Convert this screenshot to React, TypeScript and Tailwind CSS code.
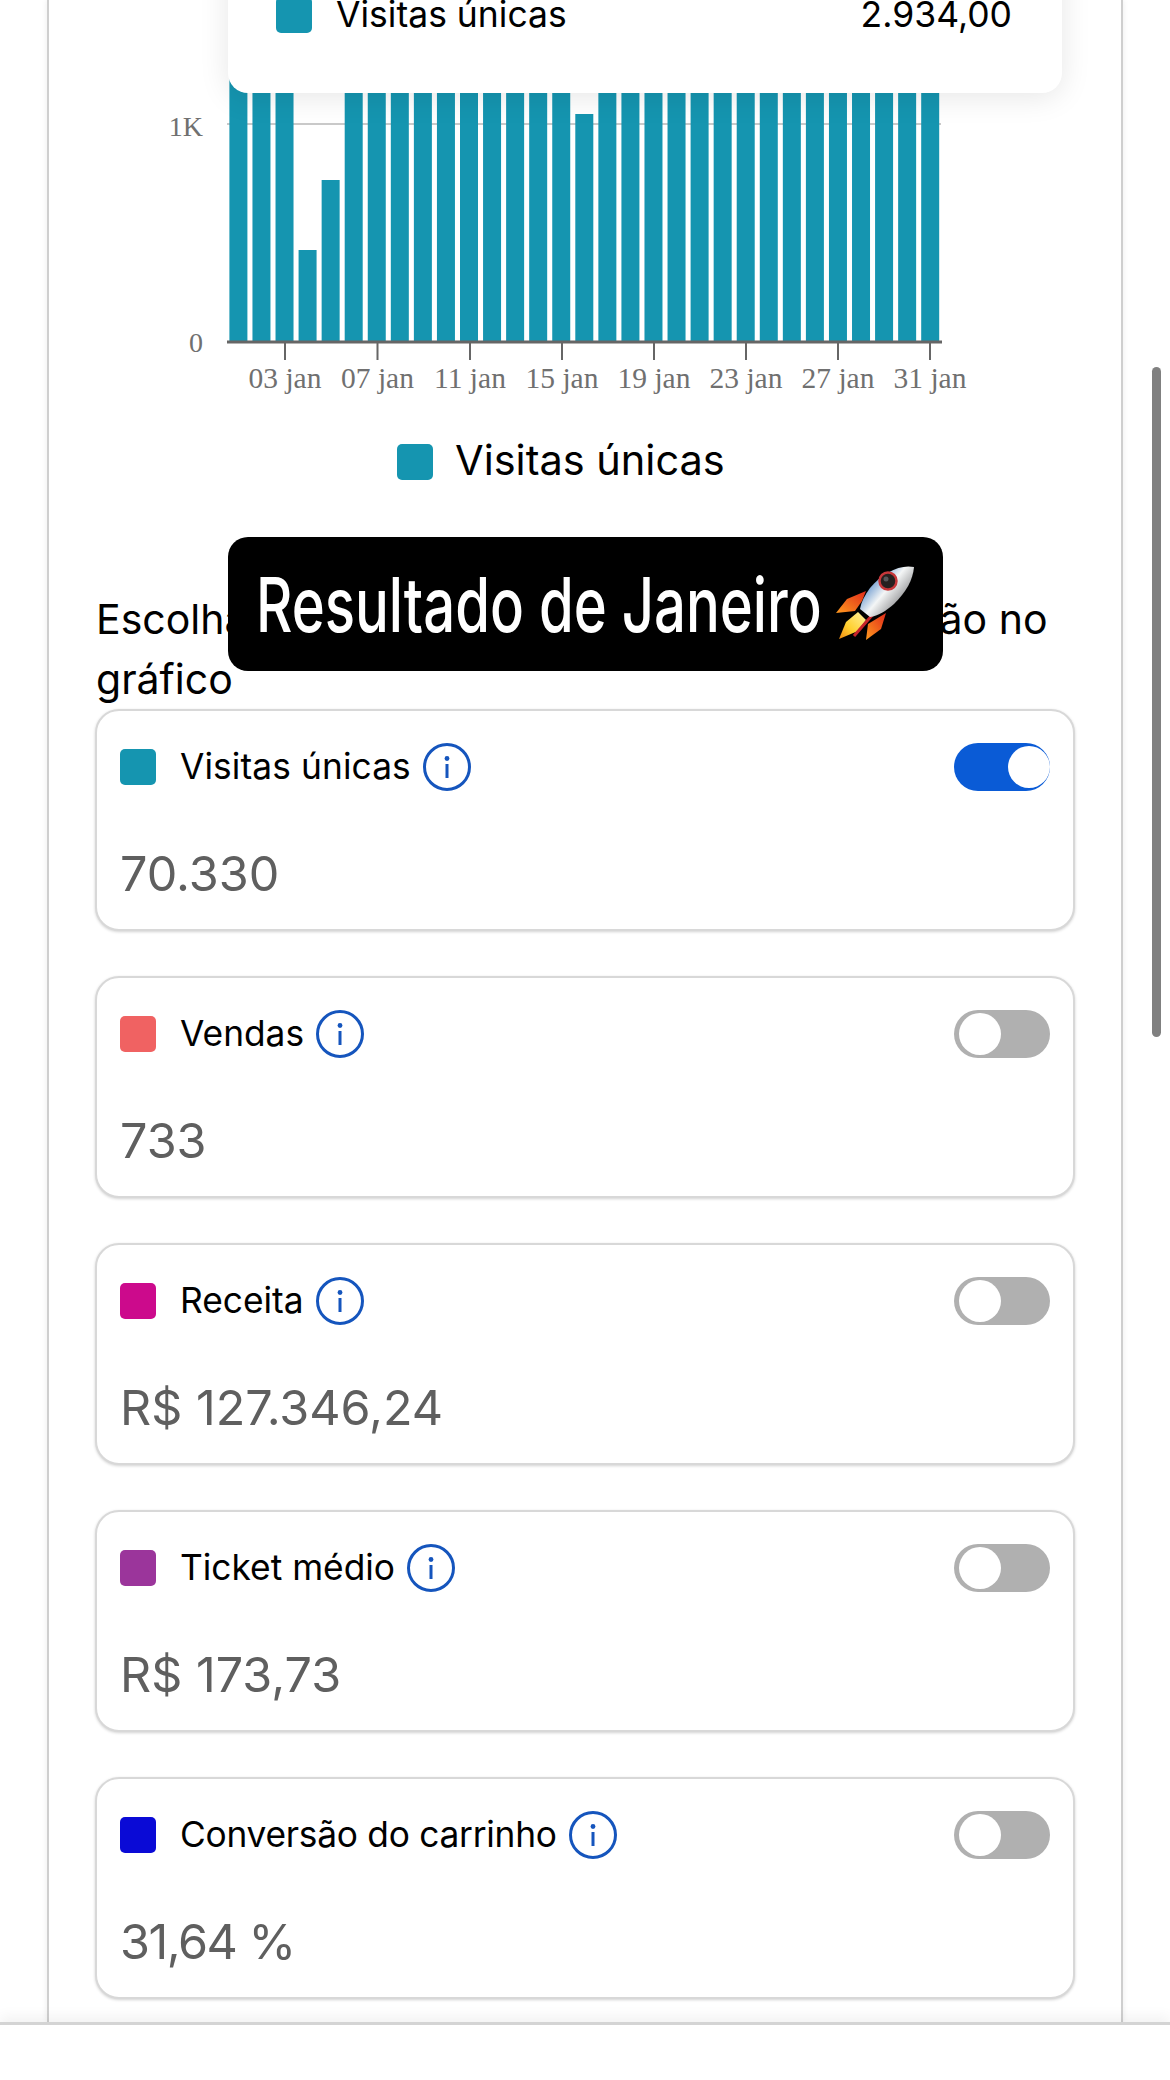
const FONT = "font-['Inter','Noto_Sans',sans-serif]";

const tickXs = [286, 378.5, 471, 563, 655, 747, 839, 931];
const tickLabels = ["03 jan", "07 jan", "11 jan", "15 jan", "19 jan", "23 jan", "27 jan", "31 jan"];
const tops: Record<number, number> = { 3: 250, 4: 180, 15: 114 };

function Chart() {
  return (
    <svg viewBox="50 0 1072 430" width="1072" height="430" className="block">
      <rect x="228" y="123" width="714" height="2" fill="#c9c9c9" />
      {Array.from({ length: 31 }, (_, i) => {
        const top = tops[i] ?? 0;
        return <rect key={i} x={230.4 + i * 23.06} y={top} width="18" height={341 - top} fill="#1595b0" />;
      })}
      <rect x="228" y="340.5" width="715" height="3" fill="#666666" />
      {tickXs.map((x, i) => (
        <g key={x}>
          <rect x={x - 1} y="342" width="2" height="18" fill="#666666" />
          <text x={x} y="388" textAnchor="middle" fontFamily="'Liberation Serif', serif" fontSize="29.5" fill="#707070">
            {tickLabels[i]}
          </text>
        </g>
      ))}
      <text x="204" y="136" textAnchor="end" fontFamily="'Liberation Serif', serif" fontSize="28" fill="#707070">1K</text>
      <text x="204" y="352" textAnchor="end" fontFamily="'Liberation Serif', serif" fontSize="28" fill="#707070">0</text>
    </svg>
  );
}

function InfoIcon() {
  return (
    <svg width="48" height="48" viewBox="0 0 48 48" className="shrink-0" fill="none">
      <circle cx="24" cy="24" r="22.5" stroke="#1555bd" strokeWidth="3" />
      <circle cx="24" cy="15.5" r="2.4" fill="#1555bd" />
      <rect x="22.5" y="21" width="3" height="14" fill="#1555bd" />
    </svg>
  );
}

function Toggle({ on }: { on: boolean }) {
  return on ? (
    <div className="ml-auto flex h-12 w-24 shrink-0 items-center justify-end rounded-full bg-[#0a5bd6]">
      <div className="h-[42px] w-[42px] rounded-full bg-white" />
    </div>
  ) : (
    <div className="ml-auto flex h-12 w-24 shrink-0 items-center rounded-full bg-[#b0b0b0] pl-[5px]">
      <div className="h-[42px] w-[42px] rounded-full bg-white" />
    </div>
  );
}

const cards = [
  { label: "Visitas únicas", value: "70.330", color: "bg-[#1595b0]", on: true, labelClass: "tracking-[0.1px]", valueClass: "" },
  { label: "Vendas", value: "733", color: "bg-[#f06262]", on: false, labelClass: "", valueClass: "" },
  { label: "Receita", value: "R$ 127.346,24", color: "bg-[#cc0a8c]", on: false, labelClass: "", valueClass: "" },
  { label: "Ticket médio", value: "R$ 173,73", color: "bg-[#9b359b]", on: false, labelClass: "", valueClass: "" },
  { label: "Conversão do carrinho", value: "31,64 %", color: "bg-[#0a0ad6]", on: false, labelClass: "tracking-[-0.25px]", valueClass: "tracking-[-1.5px]" },
];

function Card({ label, value, color, on, labelClass, valueClass }: (typeof cards)[number]) {
  return (
    <div className="h-[222px] rounded-3xl border-2 border-[#d8d8d8] bg-white pl-[23px] pr-[23px] pt-[32px] shadow-[0_1px_3px_rgba(0,0,0,0.18)]">
      <div className="flex h-12 items-center">
        <div className={`h-9 w-9 shrink-0 rounded-[5px] ${color}`} />
        <span className={`ml-6 mr-3 text-[35.3px] leading-none text-black ${labelClass}`}>{label}</span>
        <InfoIcon />
        <Toggle on={on} />
      </div>
      <div className={`mt-[53px] text-[48.5px] leading-[60px] text-[#5f5f5f] ${valueClass}`}>{value}</div>
    </div>
  );
}

function Rocket() {
  return (
    <svg viewBox="25 25 82 80" width="82" height="80" className="shrink-0">
      <defs>
        <linearGradient id="body" x1="0.15" y1="0.25" x2="0.85" y2="0.8">
          <stop offset="0" stopColor="#4f86c6" />
          <stop offset="0.45" stopColor="#f4f6f6" />
          <stop offset="1" stopColor="#77777a" />
        </linearGradient>
        <linearGradient id="fin" x1="1" y1="0" x2="0" y2="1">
          <stop offset="0" stopColor="#e02a1a" />
          <stop offset="1" stopColor="#ff9a1e" />
        </linearGradient>
        <linearGradient id="flame" x1="1" y1="0" x2="0" y2="1">
          <stop offset="0" stopColor="#fff2a0" />
          <stop offset="0.6" stopColor="#ffcf2e" />
          <stop offset="1" stopColor="#f08a12" />
        </linearGradient>
      </defs>
      <path d="M26 74 L37 60 L56 52 L52 62 L45 72 Z" fill="url(#fin)" />
      <path d="M56 101 L58 85 L76 74 L71 90 Z" fill="url(#fin)" />
      <path d="M29 100 L36 83 L48 73 L56 81 L48 92 Z" fill="url(#flame)" />
      <path d="M44 97 L71 66" stroke="#c8242a" strokeWidth="3" />
      <path d="M104 28 C90 25 72 34 60 49 C55 56 51 63 50 70 L60 78 C68 77 76 72 84 65 C96 53 103 41 104 28 Z" fill="url(#body)" />
      <circle cx="78" cy="42" r="8.5" fill="#26201f" stroke="#c7373a" strokeWidth="2.5" />
      <circle cx="76" cy="40" r="2.5" fill="#57575a" />
    </svg>
  );
}

export default function App() {
  return (
    <div className={`flex h-[2080px] w-[1170px] flex-col overflow-hidden bg-white ${FONT}`}>
      <main className="relative mx-[47px] h-[2022px] w-[1076px] border-x-2 border-[#cfcfcf] bg-white shadow-[0_0_6px_rgba(0,0,0,0.08)]">
        <Chart />

        <div className="absolute left-[179px] top-[-100px] flex h-[193px] w-[834px] items-end rounded-[20px] bg-white pb-[60px] pl-[48px] pr-[50px] shadow-[0_4px_30px_rgba(0,0,0,0.1)]">
          <div className="h-9 w-9 rounded-[5px] bg-[#1595b0]" />
          <span className="ml-6 text-[35.5px] leading-9 text-black">Visitas únicas</span>
          <span className="ml-auto text-[35.5px] leading-9 text-black">2.934,00</span>
        </div>

        <div className="mt-[14px] flex h-9 items-center pl-[348px]">
          <div className="h-9 w-9 rounded-[5px] bg-[#1595b0]" />
          <span className="ml-[22px] pb-[4px] text-[41.5px] leading-9 text-black">Visitas únicas</span>
        </div>

        <p className="ml-[47px] mt-[109px] w-[965px] text-[41px] leading-[60px] text-black">
          Escolha até duas métricas para a visualização no gráfico
        </p>

        <div className="ml-[46px] flex w-[980px] flex-col gap-[45px]">
          {cards.map((c) => (
            <Card key={c.label} {...c} />
          ))}
        </div>

        <div className="absolute left-[179px] top-[537px] flex h-[134px] w-[715px] items-center rounded-[20px] bg-black pl-[28px]">
          <span className="block w-[564px] whitespace-nowrap">
            <span className="inline-block origin-left scale-x-[0.74] text-[76px] font-medium leading-none text-white">Resultado de Janeiro</span>
          </span>
          <span className="ml-[15px]"><Rocket /></span>
        </div>
      </main>

      <div className="relative z-10 h-[58px] w-full border-t-[3px] border-[#d4d4d4] bg-white shadow-[0_-6px_12px_rgba(0,0,0,0.05)]" />

      <div className="absolute left-[1152px] top-[367px] h-[670px] w-[9px] rounded-full bg-[#808080]" />
    </div>
  );
}
